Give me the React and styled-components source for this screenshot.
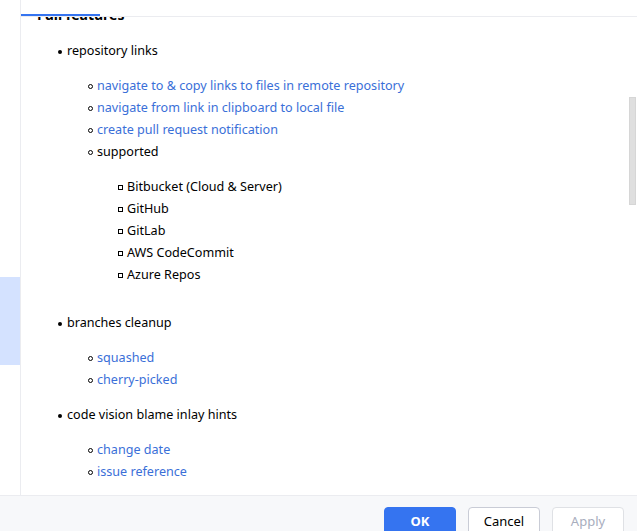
import styled, { createGlobalStyle } from 'styled-components'

const GlobalStyle = createGlobalStyle`
    html, body {
        margin: 0;
        padding: 0;
        background: #ffffff;
    }
    body {
        font-family: 'Noto Sans', 'Open Sans', sans-serif;
        font-size: 12.6px;
        color: #000000;
    }
`

const Window = styled.div`
    width: 637px;
    height: 531px;
    overflow: hidden;
    display: flex;
    flex-direction: column;
`
const Main = styled.div`
    height: 495px;
    display: flex;
    flex-shrink: 0;
`
const Sidebar = styled.div`
    width: 20px;
    border-right: 1px solid #ebecf0;
    display: flex;
    flex-direction: column;
`
const SelectedRow = styled.div`
    margin-top: 277px;
    height: 88px;
    background: #d4e2ff;
`
const ContentPane = styled.div`
    flex: 1;
    display: flex;
    flex-direction: column;
    min-width: 0;
`
const TabBar = styled.div`
    height: 17px;
    box-sizing: border-box;
    border-bottom: 1px solid #ebecf0;
    display: flex;
    flex-shrink: 0;
`
const Tab = styled.div`
    width: 79px;
    height: 16px;
    box-sizing: border-box;
    border-bottom: 2px solid ${p => (p.$active ? '#3574f0' : 'transparent')};
`
const ScrollArea = styled.div`
    flex: 1;
    overflow: hidden;
    position: relative;
`
const ScrollThumb = styled.div`
    position: absolute;
    right: 1px;
    top: 80px;
    width: 7px;
    height: 108px;
    background: #dfdfdf;
    border: 1px solid #d6d6d6;
    box-sizing: border-box;
`
const Doc = styled.div`
    margin-top: -13px;
    padding-left: 16px;
`
const Heading = styled.div`
    font-weight: bold;
    font-size: 14px;
    line-height: 22px;
    margin-bottom: 14px;
`
const List = styled.ul`
    list-style: none;
    margin: 0;
    padding: ${p => (p.$level === 1 ? '0' : '13px')} 0 ${p => (p.$level === 1 ? '0' : '13px')} 30px;
`
const Item = styled.li`
    position: relative;
    line-height: 22px;
    white-space: nowrap;
    color: ${p => (p.$link ? '#3a6fd8' : '#000000')};

    &::before {
        content: '';
        position: absolute;
        top: 9px;
        box-sizing: border-box;
        ${p => p.$level === 1 && `
            left: -9px;
            top: 10px;
            width: 4px;
            height: 4px;
            border-radius: 50%;
            background: #000;
        `}
        ${p => p.$level === 2 && `
            left: -9px;
            width: 5px;
            height: 5px;
            border-radius: 50%;
            border: 1px solid #000;
        `}
        ${p => p.$level === 3 && `
            left: -9px;
            width: 5px;
            height: 5px;
            border: 1px solid #000;
        `}
    }
`
const Footer = styled.div`
    height: 50px;
    flex-shrink: 0;
    box-sizing: border-box;
    background: #f7f8fa;
    border-top: 1px solid #ebecf0;
    display: flex;
    justify-content: flex-end;
    align-items: flex-start;
    gap: 12px;
    padding: 11px 13px 0 0;
`
const Button = styled.button`
    width: 72px;
    height: 28px;
    box-sizing: border-box;
    border-radius: 4px;
    font-family: 'Noto Sans', 'Open Sans', sans-serif;
    font-size: 13px;
    padding: 0;
    background: ${p => (p.$primary ? '#3574f0' : '#ffffff')};
    color: ${p => (p.$primary ? '#ffffff' : p.disabled ? '#a8adbd' : '#000000')};
    font-weight: ${p => (p.$primary ? 'bold' : 'normal')};
    border: 1px solid ${p => (p.$primary ? '#3574f0' : p.disabled ? '#dfe1e5' : '#c9ccd6')};
`

const features = [
    {
        title: 'repository links',
        items: [
            { text: 'navigate to & copy links to files in remote repository', link: true },
            { text: 'navigate from link in clipboard to local file', link: true },
            { text: 'create pull request notification', link: true },
            {
                text: 'supported',
                items: ['Bitbucket (Cloud & Server)', 'GitHub', 'GitLab', 'AWS CodeCommit', 'Azure Repos'],
            },
        ],
    },
    {
        title: 'branches cleanup',
        items: [
            { text: 'squashed', link: true },
            { text: 'cherry-picked', link: true },
        ],
    },
    {
        title: 'code vision blame inlay hints',
        items: [
            { text: 'change date', link: true },
            { text: 'issue reference', link: true },
        ],
    },
]

export default function App() {
    return (
        <>
            <GlobalStyle />
            <Window>
                <Main>
                    <Sidebar>
                        <SelectedRow />
                    </Sidebar>
                    <ContentPane>
                        <TabBar>
                            <Tab $active />
                        </TabBar>
                        <ScrollArea>
                            <Doc>
                                <Heading>Full features</Heading>
                                <List $level={1}>
                                    {features.map((f, i) => (
                                        <Item key={i} $level={1}>
                                            {f.title}
                                            <List $level={2}>
                                                {f.items.map((sub, j) => (
                                                    <Item key={j} $level={2} $link={sub.link}>
                                                        {sub.text}
                                                        {sub.items && (
                                                            <List $level={3}>
                                                                {sub.items.map((s, k) => (
                                                                    <Item key={k} $level={3}>{s}</Item>
                                                                ))}
                                                            </List>
                                                        )}
                                                    </Item>
                                                ))}
                                            </List>
                                        </Item>
                                    ))}
                                </List>
                            </Doc>
                            <ScrollThumb />
                        </ScrollArea>
                    </ContentPane>
                </Main>
                <Footer>
                    <Button $primary>OK</Button>
                    <Button>Cancel</Button>
                    <Button disabled>Apply</Button>
                </Footer>
            </Window>
        </>
    )
}
